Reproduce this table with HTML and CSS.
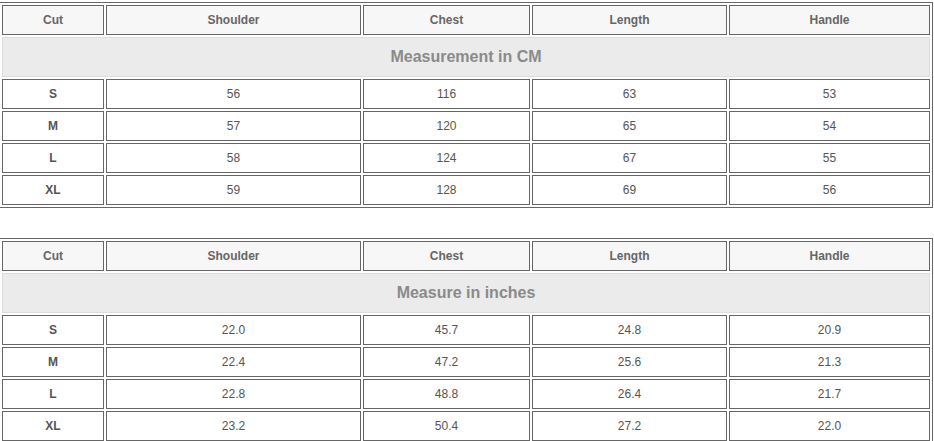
FILE: index.html
```html
<!DOCTYPE html>
<html>
<head>
<meta charset="utf-8">
<link rel="stylesheet" href="styles.css">
</head>
<body>
<table class="size-table">
  <colgroup>
    <col class="c-cut"><col class="c-shoulder"><col class="c-chest"><col class="c-length"><col class="c-handle">
  </colgroup>
  <tr class="head">
    <td>Cut</td><td>Shoulder</td><td>Chest</td><td>Length</td><td>Handle</td>
  </tr>
  <tr class="title"><td colspan="5">Measurement in CM</td></tr>
  <tr><td class="size">S</td><td>56</td><td>116</td><td>63</td><td>53</td></tr>
  <tr><td class="size">M</td><td>57</td><td>120</td><td>65</td><td>54</td></tr>
  <tr><td class="size">L</td><td>58</td><td>124</td><td>67</td><td>55</td></tr>
  <tr><td class="size">XL</td><td>59</td><td>128</td><td>69</td><td>56</td></tr>
</table>
<table class="size-table">
  <colgroup>
    <col class="c-cut"><col class="c-shoulder"><col class="c-chest"><col class="c-length"><col class="c-handle">
  </colgroup>
  <tr class="head">
    <td>Cut</td><td>Shoulder</td><td>Chest</td><td>Length</td><td>Handle</td>
  </tr>
  <tr class="title"><td colspan="5">Measure in inches</td></tr>
  <tr><td class="size">S</td><td>22.0</td><td>45.7</td><td>24.8</td><td>20.9</td></tr>
  <tr><td class="size">M</td><td>22.4</td><td>47.2</td><td>25.6</td><td>21.3</td></tr>
  <tr><td class="size">L</td><td>22.8</td><td>48.8</td><td>26.4</td><td>21.7</td></tr>
  <tr><td class="size">XL</td><td>23.2</td><td>50.4</td><td>27.2</td><td>22.0</td></tr>
</table>
</body>
</html>
```

FILE: styles.css
```css
html, body {
  margin: 0;
  padding: 0;
  background: #ffffff;
}
body {
  font-family: "Liberation Sans", Arial, sans-serif;
  font-size: 12px;
  color: #555555;
}
.size-table {
  table-layout: fixed;
  border-collapse: separate;
  border-spacing: 2px;
  border: 1px solid #666666;
  width: 934px;
  margin: 2px 0 30px -1px;
}
.size-table td {
  border: 1px solid #666666;
  padding: 0;
  line-height: 28px;
  text-align: center;
  white-space: nowrap;
  overflow: hidden;
}
.c-cut { width: 102px; }
.c-shoulder { width: 255px; }
.c-chest { width: 167px; }
.c-length { width: 195px; }
.c-handle { width: 201px; }
.head td {
  background: #f7f7f7;
  font-weight: bold;
  color: #666666;
}
.title td {
  background: #ebebeb;
  border-color: #dddddd;
  line-height: 38px;
  font-size: 16px;
  font-weight: bold;
  color: #8a8a8a;
}
.size {
  font-weight: bold;
}
```
